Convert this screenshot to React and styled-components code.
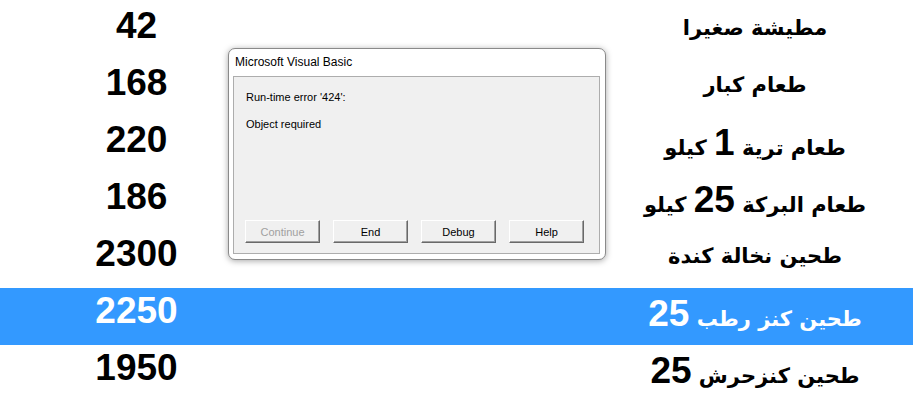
import React from "react"
import styled, { createGlobalStyle } from "styled-components"

const items = [
  { price: "42", name: "مطيشة صغيرا" },
  { price: "168", name: "طعام كبار" },
  { price: "220", name: "طعام ترية 1 كيلو" },
  { price: "186", name: "طعام البركة 25 كيلو" },
  { price: "2300", name: "طحين نخالة كندة" },
  { price: "2250", name: "طحين كنز رطب 25", selected: true },
  { price: "1950", name: "طحين كنزحرش 25" },
  { price: "800", name: "طحين ابيض 50" },
]

// digits in the names are set in the larger latin face
function ItemName({ text }) {
  return (
    <Name dir="rtl">
      {text.split(/(\d+)/).map((part, i) =>
        /^\d+$/.test(part) ? <Num key={i}>{part}</Num> : part
      )}
    </Name>
  )
}

export default function App() {
  return (
    <>
      <GlobalStyle />
      <Page>
        <List>
          {items.map((item) => (
            <Row key={item.price} $selected={item.selected}>
              <Price>{item.price}</Price>
              <Spacer />
              <ItemName text={item.name} />
            </Row>
          ))}
        </List>

        <Dialog>
          <Title>Microsoft Visual Basic</Title>
          <Panel>
            <Message>Run-time error '424':</Message>
            <Message>Object required</Message>
            <ButtonRow>
              <Button disabled>Continue</Button>
              <Button>End</Button>
              <Button>Debug</Button>
              <Button>Help</Button>
            </ButtonRow>
          </Panel>
        </Dialog>
      </Page>
    </>
  )
}

const GlobalStyle = createGlobalStyle`
  html, body {
    margin: 0;
    padding: 0;
    background: #ffffff;
    overflow: hidden;
  }
`

const Page = styled.div`
  position: relative;
  width: 913px;
  height: 411px;
  overflow: hidden;
  background: #ffffff;
`

const List = styled.div`
  padding-top: 3px;
  display: grid;
`

const Row = styled.div`
  height: 57px;
  display: grid;
  grid-template-columns: 273px 324px 316px;
  align-items: start;
  background: ${(p) => (p.$selected ? "#3399ff" : "transparent")};
  color: ${(p) => (p.$selected ? "#ffffff" : "#000000")};
  font-family: "Liberation Sans", "DejaVu Sans", sans-serif;
  font-weight: bold;
`

const Price = styled.div`
  height: 45px;
  font-size: 37px;
  line-height: 45px;
  text-align: center;
`

const Spacer = styled.div``

const Name = styled.div`
  height: 45px;
  padding-top: 3px;
  font-family: "DejaVu Sans", sans-serif;
  font-size: 21px;
  line-height: 45px;
  text-align: center;
  white-space: nowrap;
`

const Num = styled.span`
  font-family: "Liberation Sans", Arial, sans-serif;
  font-size: 37px;
`

const Dialog = styled.div`
  position: absolute;
  left: 228px;
  top: 48px;
  width: 378px;
  height: 212px;
  box-sizing: border-box;
  background: #ffffff;
  border: 1px solid #8a8a8a;
  border-radius: 7px;
  box-shadow: 0 1px 6px rgba(0, 0, 0, 0.35);
  padding: 0 5px 5px 4px;
  display: flex;
  flex-direction: column;
  font-family: "Liberation Sans", Arial, sans-serif;
`

const Title = styled.div`
  height: 27px;
  padding-left: 2px;
  font-size: 12px;
  line-height: 27px;
  color: #000000;
`

const Panel = styled.div`
  flex: 1;
  box-sizing: border-box;
  background: #f0f0f0;
  border: 1px solid #adadad;
  padding: 14px 11px 10px 11px;
  display: flex;
  flex-direction: column;
  gap: 14px;
`

const Message = styled.div`
  padding-left: 1px;
  font-size: 11px;
  line-height: 13px;
  color: #000000;
`

const ButtonRow = styled.div`
  margin-top: auto;
  display: flex;
  gap: 13px;
`

const Button = styled.button`
  width: 75px;
  height: 23px;
  box-sizing: border-box;
  padding: 0;
  background: #f0f0f0;
  border-top: 1px solid #ffffff;
  border-left: 1px solid #ffffff;
  border-right: 1px solid #696969;
  border-bottom: 1px solid #696969;
  box-shadow: inset -1px -1px 0 #a0a0a0;
  font-family: "Liberation Sans", Arial, sans-serif;
  font-size: 11px;
  color: #000000;

  &:disabled {
    color: #a0a0a0;
  }
`
